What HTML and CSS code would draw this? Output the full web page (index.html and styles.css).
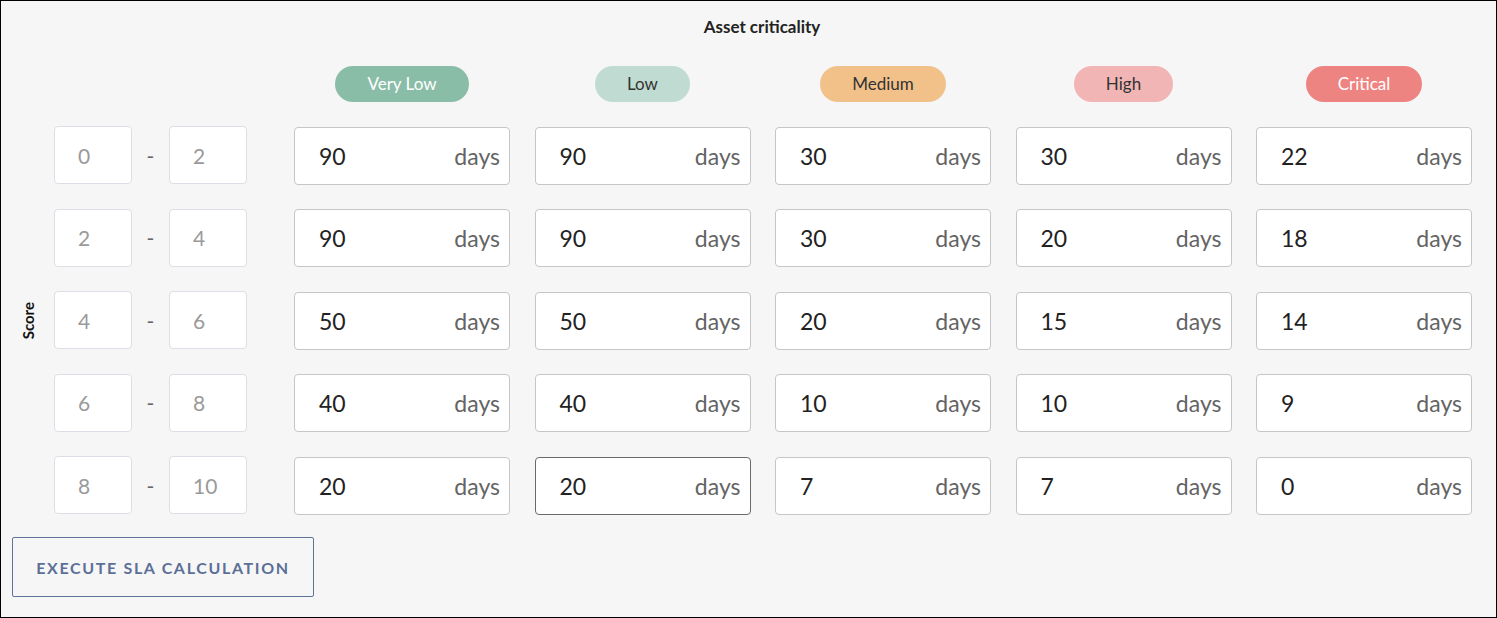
FILE: index.html
```html
<!DOCTYPE html>
<html lang="en">
<head>
<meta charset="utf-8">
<title>SLA matrix</title>
<link rel="stylesheet" href="styles.css">
</head>
<body>
<div class="frame">
  <div class="title">Asset criticality</div>
  <div class="body">
    <div class="left">
      <div class="score-label"><span>Score</span></div>
      <div class="ranges">
        <div class="rbox">0</div><div class="dash">-</div><div class="rbox">2</div>
        <div class="rbox">2</div><div class="dash">-</div><div class="rbox">4</div>
        <div class="rbox">4</div><div class="dash">-</div><div class="rbox">6</div>
        <div class="rbox">6</div><div class="dash">-</div><div class="rbox">8</div>
        <div class="rbox">8</div><div class="dash">-</div><div class="rbox">10</div>
      </div>
    </div>
    <div class="matrix">
      <div class="head"><span class="pill very-low">Very Low</span></div>
      <div class="head"><span class="pill low">Low</span></div>
      <div class="head"><span class="pill medium">Medium</span></div>
      <div class="head"><span class="pill high">High</span></div>
      <div class="head"><span class="pill critical">Critical</span></div>

      <div class="field"><span class="val">90</span><span class="unit">days</span></div>
      <div class="field"><span class="val">90</span><span class="unit">days</span></div>
      <div class="field"><span class="val">30</span><span class="unit">days</span></div>
      <div class="field"><span class="val">30</span><span class="unit">days</span></div>
      <div class="field"><span class="val">22</span><span class="unit">days</span></div>

      <div class="field"><span class="val">90</span><span class="unit">days</span></div>
      <div class="field"><span class="val">90</span><span class="unit">days</span></div>
      <div class="field"><span class="val">30</span><span class="unit">days</span></div>
      <div class="field"><span class="val">20</span><span class="unit">days</span></div>
      <div class="field"><span class="val">18</span><span class="unit">days</span></div>

      <div class="field"><span class="val">50</span><span class="unit">days</span></div>
      <div class="field"><span class="val">50</span><span class="unit">days</span></div>
      <div class="field"><span class="val">20</span><span class="unit">days</span></div>
      <div class="field"><span class="val">15</span><span class="unit">days</span></div>
      <div class="field"><span class="val">14</span><span class="unit">days</span></div>

      <div class="field"><span class="val">40</span><span class="unit">days</span></div>
      <div class="field"><span class="val">40</span><span class="unit">days</span></div>
      <div class="field"><span class="val">10</span><span class="unit">days</span></div>
      <div class="field"><span class="val">10</span><span class="unit">days</span></div>
      <div class="field"><span class="val">9</span><span class="unit">days</span></div>

      <div class="field"><span class="val">20</span><span class="unit">days</span></div>
      <div class="field active"><span class="val">20</span><span class="unit">days</span></div>
      <div class="field"><span class="val">7</span><span class="unit">days</span></div>
      <div class="field"><span class="val">7</span><span class="unit">days</span></div>
      <div class="field"><span class="val">0</span><span class="unit">days</span></div>
    </div>
  </div>
  <button class="exec">Execute SLA calculation</button>
</div>
</body>
</html>
```

FILE: styles.css
```css
* { box-sizing: border-box; }
html, body { margin: 0; padding: 0; }
body {
  font-family: Lato, "Noto Sans", "Liberation Sans", sans-serif;
  background: #f6f6f6;
}
.frame {
  width: 1497px;
  height: 618px;
  border: 1px solid #000;
  background: #f6f6f6;
}
.title {
  margin-top: 16px;
  height: 20px;
  line-height: 20px;
  padding-left: 27px;
  text-align: center;
  font-size: 17px;
  font-weight: 700;
  color: #222;
}
.body {
  display: flex;
  margin-top: 29px;
}
.left {
  width: 293px;
  display: flex;
  padding-top: 60px;
}
.score-label {
  width: 53px;
  height: 389px;
  display: flex;
  align-items: center;
  justify-content: center;
}
.score-label span {
  writing-mode: vertical-rl;
  transform: rotate(180deg);
  font-size: 15px;
  font-weight: 700;
  color: #111;
}
.ranges {
  display: grid;
  grid-template-columns: 78px 37px 78px;
  grid-template-rows: repeat(5, 58px);
  row-gap: 24.5px;
}
.rbox {
  background: #fff;
  border: 1px solid #dcdfe6;
  border-radius: 4px;
  padding-left: 23px;
  display: flex;
  align-items: center;
  font-size: 21px;
  color: #9a9a9a;
}
.dash {
  display: flex;
  align-items: center;
  justify-content: center;
  font-size: 21px;
  color: #666;
}
.matrix {
  display: grid;
  grid-template-columns: repeat(5, 216px);
  grid-template-rows: 36px repeat(5, 58px);
  column-gap: 24.5px;
  row-gap: 24.5px;
}
.head {
  display: flex;
  justify-content: center;
}
.pill {
  height: 36px;
  line-height: 36px;
  padding: 0 32px;
  border-radius: 18px;
  font-size: 17px;
  color: #333;
}
.very-low { background: #8abda8; color: #fff; }
.low { background: #c0dcd2; }
.medium { background: #f2c189; }
.high { background: #f0b5b4; }
.critical { background: #ee8482; color: #fff; }
.field {
  background: #fff;
  border: 1px solid #c6c6c6;
  border-radius: 4px;
  display: flex;
  align-items: center;
  justify-content: space-between;
  padding: 0 9px 0 24px;
  font-size: 23px;
}
.field.active { border-color: #6a6a6a; }
.val { color: #222; }
.unit { color: #646464; }
.exec {
  display: block;
  margin: 22px 0 0 11px;
  width: 302px;
  height: 60px;
  padding: 0;
  background: transparent;
  border: 1px solid #5f7299;
  border-radius: 2px;
  font-family: Lato, "Noto Sans", "Liberation Sans", sans-serif;
  font-size: 16px;
  font-weight: 700;
  letter-spacing: 1.65px;
  text-transform: uppercase;
  color: #5c6f96;
}
```
